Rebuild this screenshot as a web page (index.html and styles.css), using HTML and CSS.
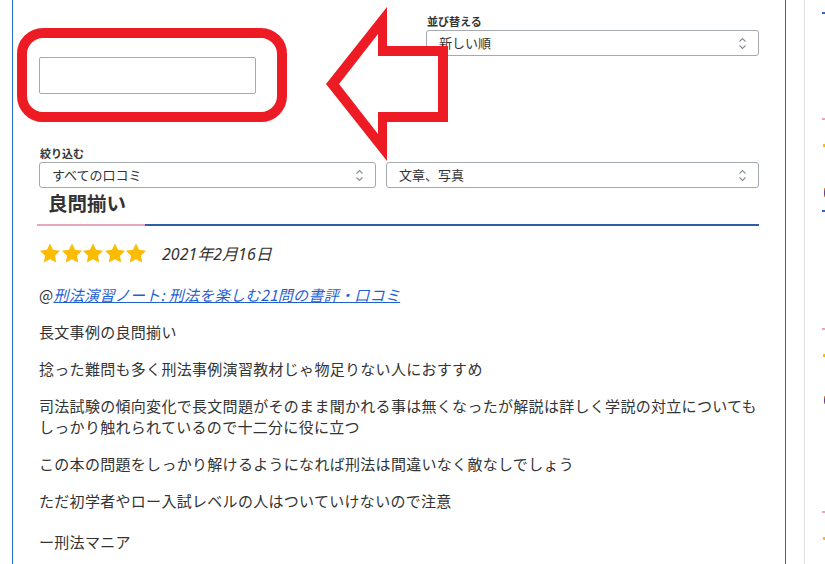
FILE: index.html
```html
<!DOCTYPE html>
<html lang="ja">
<head>
<meta charset="utf-8">
<title>口コミ</title>
<link rel="stylesheet" href="styles.css">
</head>
<body>
<div class="page">
  <main class="panel">
    <div class="toolbar">
      <input class="search" type="text" aria-label="検索">
      <div class="sort">
        <div class="label">並び替える</div>
        <div class="select">
          <span>新しい順</span>
          <svg class="chev" viewBox="0 0 9 15" width="9" height="15"><polyline points="1.5,5.5 4.5,2.5 7.5,5.5"/><polyline points="1.5,9.5 4.5,12.5 7.5,9.5"/></svg>
        </div>
      </div>
    </div>
    <div class="filter">
      <div class="label">絞り込む</div>
      <div class="filter-row">
        <div class="select">
          <span>すべての口コミ</span>
          <svg class="chev" viewBox="0 0 9 15" width="9" height="15"><polyline points="1.5,5.5 4.5,2.5 7.5,5.5"/><polyline points="1.5,9.5 4.5,12.5 7.5,9.5"/></svg>
        </div>
        <div class="select">
          <span>文章、写真</span>
          <svg class="chev" viewBox="0 0 9 15" width="9" height="15"><polyline points="1.5,5.5 4.5,2.5 7.5,5.5"/><polyline points="1.5,9.5 4.5,12.5 7.5,9.5"/></svg>
        </div>
      </div>
    </div>
    <article class="review">
      <h2 class="review-title">良問揃い</h2>
      <div class="meta">
        <div class="stars">
          <svg class="star" viewBox="2 1.5 20 20"><path d="M12 2l3.09 6.26L22 9.27l-5 4.87 1.18 6.88L12 17.77l-6.18 3.25L7 14.14 2 9.27l6.91-1.010L12 2z"/></svg>
          <svg class="star" viewBox="2 1.5 20 20"><path d="M12 2l3.09 6.26L22 9.27l-5 4.87 1.18 6.88L12 17.77l-6.18 3.25L7 14.14 2 9.27l6.91-1.01L12 2z"/></svg>
          <svg class="star" viewBox="2 1.5 20 20"><path d="M12 2l3.09 6.26L22 9.27l-5 4.87 1.18 6.88L12 17.77l-6.18 3.25L7 14.14 2 9.27l6.91-1.01L12 2z"/></svg>
          <svg class="star" viewBox="2 1.5 20 20"><path d="M12 2l3.09 6.26L22 9.27l-5 4.87 1.18 6.88L12 17.77l-6.18 3.25L7 14.14 2 9.27l6.91-1.01L12 2z"/></svg>
          <svg class="star" viewBox="2 1.5 20 20"><path d="M12 2l3.09 6.26L22 9.27l-5 4.87 1.18 6.88L12 17.77l-6.18 3.25L7 14.14 2 9.27l6.91-1.01L12 2z"/></svg>
        </div>
        <span class="date">2021年2月16日</span>
      </div>
      <p class="source">@<a href="#">刑法演習ノート: 刑法を楽しむ21問の書評・口コミ</a></p>
      <p>長文事例の良問揃い</p>
      <p>捻った難問も多く刑法事例演習教材じゃ物足りない人におすすめ</p>
      <p>司法試験の傾向変化で長文問題がそのまま聞かれる事は無くなったが解説は詳しく学説の対立についてもしっかり触れられているので十二分に役に立つ</p>
      <p>この本の問題をしっかり解けるようになれば刑法は間違いなく敵なしでしょう</p>
      <p>ただ初学者やロー入試レベルの人はついていけないので注意</p>
      <p class="sign">ー刑法マニア</p>
    </article>
  </main>
  <div class="divider"></div>
  <aside class="side">
    <span class="bit bit-blue b1"></span>
    <span class="bit bit-pink b2"></span>
    <span class="bit bit-yellow b3"></span>
    <span class="bit bit-avatar b4"></span>
    <span class="bit bit-blue b5"></span>
    <span class="bit bit-pink b6"></span>
    <span class="bit bit-yellow b7"></span>
    <span class="bit bit-avatar b8"></span>
    <span class="bit bit-pink b9"></span>
    <span class="bit bit-yellow b10"></span>
  </aside>
  <svg class="annot" viewBox="0 0 825 564" width="825" height="564">
    <rect x="22" y="33" width="260" height="84" rx="21" ry="21" fill="none" stroke="#ed1c24" stroke-width="10"/>
    <path fill="#ed1c24" fill-rule="evenodd" d="M326 84 L387 7 L387 46 L448 46 L448 122 L387 122 L387 161 Z M339 84 L378 134 L378 112 L438 112 L438 56 L378 56 L378 34 Z"/>
  </svg>
</div>
</body>
</html>
```

FILE: styles.css
```css
html, body {
  margin: 0;
  padding: 0;
  background: #ffffff;
}

body {
  font-family: "Noto Sans CJK JP", "Noto Sans", sans-serif;
  color: #333333;
  width: 825px;
  height: 564px;
  overflow: hidden;
}

.page {
  position: relative;
  display: flex;
  height: 564px;
  overflow: hidden;
}

.panel {
  flex: none;
  box-sizing: border-box;
  width: 774px;
  margin-left: 12px;
  padding: 0 26px 0 26px;
  border-left: 1px solid #2a73c9;
  border-right: 1px solid #2a67b8;
  height: 564px;
}

.toolbar {
  display: flex;
  justify-content: space-between;
  align-items: flex-start;
  height: 147px;
}

.search {
  box-sizing: border-box;
  width: 217px;
  height: 37px;
  margin: 57px 0 0;
  padding: 0;
  border: 1px solid #a5a9b1;
  border-radius: 2px;
  background: #fff;
  outline: none;
}

.sort {
  width: 333px;
  margin-top: 15px;
}

.label {
  font-size: 11px;
  line-height: 13px;
  font-weight: bold;
  color: #333;
  margin-left: 1px;
}

.select {
  box-sizing: border-box;
  display: flex;
  align-items: center;
  justify-content: space-between;
  height: 26px;
  margin-top: 2px;
  padding: 0 11px 2px 12px;
  border: 1px solid #a5a9b1;
  border-radius: 3px;
  font-size: 13px;
  color: #333;
  background: #fff;
}

.chev {
  margin-top: 2px;
}

.chev polyline {
  fill: none;
  stroke: #8a8e96;
  stroke-width: 1.1;
}

.filter-row {
  display: grid;
  grid-template-columns: 337px 1fr;
  column-gap: 10px;
}

.filter-row .select {
  margin-top: 2px;
}

.review-title {
  position: relative;
  margin: 2px 0 0 -2px;
  padding: 0 0 8px 11px;
  font-size: 19.5px;
  line-height: 26px;
  font-weight: bold;
  color: #333;
  border-bottom: 2px solid #2d5ea8;
}

.review-title::after {
  content: "";
  position: absolute;
  left: 0;
  bottom: -2px;
  width: 108px;
  height: 2px;
  background: #e9a6bd;
}

.meta {
  display: flex;
  align-items: center;
  margin-top: 16px;
  height: 21px;
}

.stars {
  display: flex;
  gap: 1.5px;
  margin-left: 1px;
}

.star {
  width: 20px;
  height: 20px;
  fill: #fbbc05;
}

.date {
  margin-left: 16px;
  font-family: "Noto Sans", "Noto Sans CJK JP", sans-serif;
  font-style: italic;
  font-size: 16px;
  color: #333;
}

.review p {
  margin: 16px -2px 0 0;
  font-size: 15px;
  letter-spacing: 0.3px;
  line-height: 21px;
  color: #333;
}

.review p.source {
  margin-top: 21px;
}

.source a {
  color: #1f5fd3;
  font-style: italic;
  text-decoration: underline;
}

.review p.sign {
  margin-top: 20px;
}

.divider {
  flex: none;
  width: 1px;
  margin-left: 18px;
  background: #dddddd;
}

.side {
  flex: none;
  display: flex;
  flex-direction: column;
  align-items: flex-start;
  width: 40px;
  margin-left: 17px;
}

.bit {
  display: block;
  flex: none;
  width: 4px;
  height: 2px;
}

.bit-blue { background: #3a5fd0; }
.bit-pink { background: #e9a6bd; height: 2px; }
.bit-yellow { background: #fbbc05; height: 3px; margin-left: 1px; }
.bit-avatar {
  width: 3px;
  margin-left: 2px;
  background: linear-gradient(#e8a23c, #6a3f9a 40%, #6a3f9a 70%, #e8a23c);
}

.b1 { margin-top: 12px; }
.b2 { margin-top: 104px; }
.b3 { margin-top: 24px; }
.b4 { margin-top: 41px; height: 9px; }
.b5 { margin-top: 13px; }
.b6 { margin-top: 116px; }
.b7 { margin-top: 24px; }
.b8 { margin-top: 39px; height: 8px; }
.b9 { margin-top: 107px; }
.b10 { margin-top: 24px; }

.annot {
  position: absolute;
  left: 0;
  top: 0;
  pointer-events: none;
}
```
